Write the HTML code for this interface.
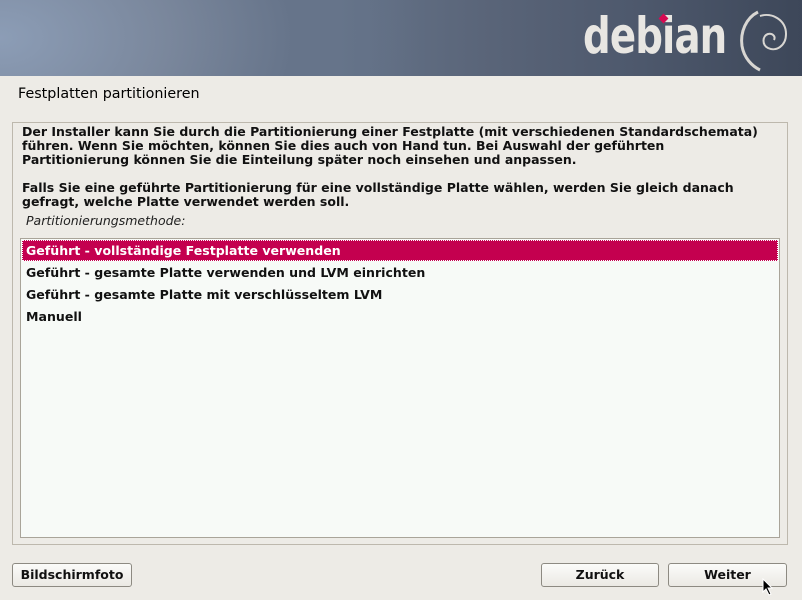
<!DOCTYPE html>
<html><head><meta charset="utf-8"><style>
body{margin:0;width:802px;height:600px;background:#edebe6;position:relative;overflow:hidden;font-family:"DejaVu Sans",sans-serif;}
.hdr{position:absolute;left:0;top:0;width:802px;height:76px;background:radial-gradient(ellipse 420px 260px at 0px 38px,#8c9db6 0%,#7a879c 40%,#66748a 70%,rgba(0,0,0,0) 100%),linear-gradient(90deg,#7d8aa0 0%,#66758b 40%,#5a6579 60%,#4d586c 80%,#3d4759 100%);}
.logo{position:absolute;left:583px;top:7px;font-family:"DejaVu Sans Condensed","DejaVu Sans",sans-serif;font-size:50px;font-weight:bold;color:#e8e6e2;letter-spacing:-1px;transform:scaleX(0.86);transform-origin:left;}
.dot{position:absolute;left:660px;top:15px;width:7px;height:7px;background:#d70a53;transform:rotate(45deg);}
.title{position:absolute;left:18px;top:86px;font-size:14.3px;color:#000;}
.frame{position:absolute;left:12px;top:122px;width:774px;height:421px;border:1px solid #bdb8ad;}
.txt{position:absolute;left:22px;top:125px;font-size:12.5px;font-weight:bold;line-height:14px;color:#111;white-space:pre;}
.lbl{position:absolute;left:26px;top:213px;font-size:12.5px;font-style:italic;color:#222;}
.list{position:absolute;left:20px;top:238px;width:758px;height:298px;border:1px solid #a9a499;background:#f7faf7;}
.item{position:absolute;left:5px;font-size:12.55px;font-weight:bold;color:#111;}
.sel{position:absolute;left:1px;top:1px;width:756px;height:21px;background:#c4004f;border:1px dotted #fff;box-sizing:border-box;}
.btn{position:absolute;height:24px;border:1px solid #8d8a82;border-radius:3px;background:linear-gradient(#fbfbf9,#ebe9e4);font-size:12.5px;font-weight:bold;text-align:center;line-height:22px;color:#111;box-sizing:border-box;}
</style></head><body>
<div class="hdr"></div>
<div class="logo">debian</div>
<div class="dot"></div>
<svg style="position:absolute;left:738px;top:8px" width="56" height="64" viewBox="0 0 56 64"><path d="M20 4 C8 10 2 24 4 38 C6 50 14 58 22 62" stroke="#d8d6d2" stroke-width="3" fill="none"/><path d="M22 8 C34 4 48 12 48 26 C48 38 38 44 30 40 C24 37 24 28 30 26 C34 25 38 28 36 32" stroke="#d8d6d2" stroke-width="2" fill="none"/></svg>
<div class="title">Festplatten partitionieren</div>
<div class="frame"></div>
<div class="txt">Der Installer kann Sie durch die Partitionierung einer Festplatte (mit verschiedenen Standardschemata)
führen. Wenn Sie möchten, können Sie dies auch von Hand tun. Bei Auswahl der geführten
Partitionierung können Sie die Einteilung später noch einsehen und anpassen.

Falls Sie eine geführte Partitionierung für eine vollständige Platte wählen, werden Sie gleich danach
gefragt, welche Platte verwendet werden soll.</div>
<div class="lbl">Partitionierungsmethode:</div>
<div class="list">
<div class="sel"></div>
<div class="item" style="top:4px;color:#fff">Geführt - vollständige Festplatte verwenden</div>
<div class="item" style="top:26px">Geführt - gesamte Platte verwenden und LVM einrichten</div>
<div class="item" style="top:48px">Geführt - gesamte Platte mit verschlüsseltem LVM</div>
<div class="item" style="top:70px">Manuell</div>
</div>
<div class="btn" style="left:12px;top:563px;width:120px">Bildschirmfoto</div>
<div class="btn" style="left:541px;top:563px;width:118px">Zurück</div>
<div class="btn" style="left:668px;top:563px;width:119px">Weiter</div>
<svg style="position:absolute;left:762px;top:578px" width="12" height="18" viewBox="0 0 12 18"><path d="M1 1 L1 14 L4 11 L7 17 L9 16 L6 10 L10 10 Z" fill="#000" stroke="#fff" stroke-width="1"/></svg>
</body></html>
